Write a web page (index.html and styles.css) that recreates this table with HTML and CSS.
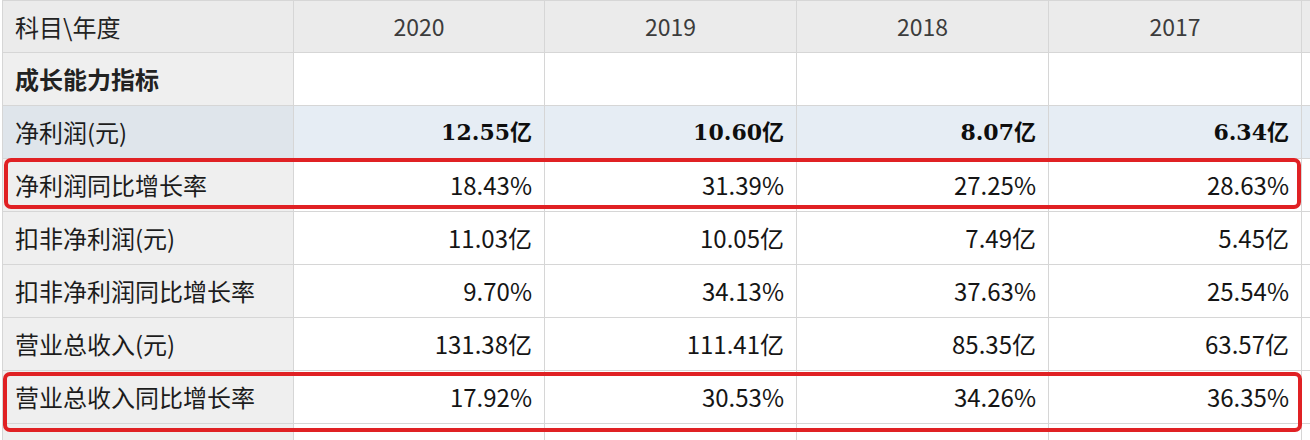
FILE: index.html
```html
<!DOCTYPE html>
<html lang="zh-CN">
<head>
<meta charset="utf-8">
<link rel="stylesheet" href="styles.css">
</head>
<body>
<div class="sheet">
  <table class="fin">
    <colgroup>
      <col class="c-label">
      <col class="c-year">
      <col class="c-year">
      <col class="c-year">
      <col class="c-year">
      <col class="c-rest">
    </colgroup>
    <thead>
      <tr class="head">
        <th class="label">科目\年度</th>
        <th>2020</th>
        <th>2019</th>
        <th>2018</th>
        <th>2017</th>
        <th></th>
      </tr>
    </thead>
    <tbody>
      <tr>
        <td class="label section">成长能力指标</td>
        <td></td><td></td><td></td><td></td><td></td>
      </tr>
      <tr class="hl">
        <td class="label">净利润(元)</td>
        <td class="num bold">12.55亿</td>
        <td class="num bold">10.60亿</td>
        <td class="num bold">8.07亿</td>
        <td class="num bold">6.34亿</td>
        <td></td>
      </tr>
      <tr>
        <td class="label">净利润同比增长率</td>
        <td class="num">18.43%</td>
        <td class="num">31.39%</td>
        <td class="num">27.25%</td>
        <td class="num">28.63%</td>
        <td></td>
      </tr>
      <tr>
        <td class="label">扣非净利润(元)</td>
        <td class="num">11.03亿</td>
        <td class="num">10.05亿</td>
        <td class="num">7.49亿</td>
        <td class="num">5.45亿</td>
        <td></td>
      </tr>
      <tr>
        <td class="label">扣非净利润同比增长率</td>
        <td class="num">9.70%</td>
        <td class="num">34.13%</td>
        <td class="num">37.63%</td>
        <td class="num">25.54%</td>
        <td></td>
      </tr>
      <tr>
        <td class="label">营业总收入(元)</td>
        <td class="num">131.38亿</td>
        <td class="num">111.41亿</td>
        <td class="num">85.35亿</td>
        <td class="num">63.57亿</td>
        <td></td>
      </tr>
      <tr>
        <td class="label">营业总收入同比增长率</td>
        <td class="num">17.92%</td>
        <td class="num">30.53%</td>
        <td class="num">34.26%</td>
        <td class="num">36.35%</td>
        <td></td>
      </tr>
      <tr>
        <td class="label"></td>
        <td></td><td></td><td></td><td></td><td></td>
      </tr>
    </tbody>
  </table>
  <div class="mark mark-a"></div>
  <div class="mark mark-b"></div>
</div>
</body>
</html>
```
FILE: styles.css
```css
html, body {
  margin: 0;
  padding: 0;
  background: #ffffff;
}
body {
  font-family: "Noto Sans CJK SC", "Microsoft YaHei", sans-serif;
  color: #1e1e1e;
}
.sheet {
  position: relative;
  width: 1310px;
  height: 440px;
  overflow: hidden;
  padding-left: 2px;
  box-sizing: border-box;
}
.fin {
  border-collapse: collapse;
  table-layout: fixed;
  width: 1340px;
  font-size: 24px;
}
.c-label { width: 291px; }
.c-year:nth-child(2) { width: 251px; }
.c-year:nth-child(3) { width: 252px; }
.c-year:nth-child(4) { width: 252px; }
.c-year:nth-child(5) { width: 253px; }
.c-rest { width: 41px; }

.fin th, .fin td {
  border: 1px solid #d6d6d6;
  height: 53px;
  padding: 0 12px;
  box-sizing: border-box;
  vertical-align: middle;
  white-space: nowrap;
  line-height: 1;
}
.fin .head th {
  height: 52px;
  background: #ebebeb;
  font-weight: normal;
  color: #3c3c3c;
  text-align: center;
  font-size: 23px;
}
.fin .head th.label {
  text-align: left;
  color: #222;
  font-size: 24px;
}
.fin .label {
  background: #efefef;
  text-align: left;
  padding-left: 12px;
  color: #1c1c1c;
}
.fin .section {
  font-weight: bold;
  color: #222;
}
.fin .num {
  text-align: right;
  padding-right: 12px;
  color: #151515;
}
.fin .bold {
  font-family: "DejaVu Serif", "Noto Sans CJK SC", serif;
  font-weight: bold;
  font-size: 22px;
  color: #0e0e0e;
}
.fin .hl td {
  background: #e6edf4;
}
.fin .hl td.label {
  background: #dfe5eb;
}

.mark {
  position: absolute;
  border: 4px solid #e02124;
  border-radius: 7px;
  box-sizing: border-box;
}
.mark-a {
  left: 4px;
  top: 158px;
  width: 1297px;
  height: 51px;
}
.mark-b {
  left: 3px;
  top: 372px;
  width: 1299px;
  height: 60px;
}
```
